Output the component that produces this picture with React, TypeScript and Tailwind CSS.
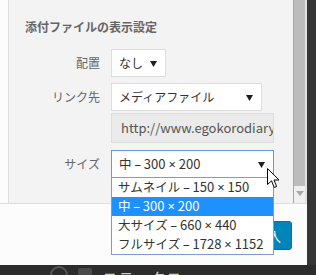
const font = "font-['Noto_Sans_CJK_JP','Noto_Sans',sans-serif]";

const sizes = [
  { name: "サムネイル", dims: ["150", "150"], selected: false },
  { name: "中", dims: ["300", "200"], selected: true },
  { name: "大サイズ", dims: ["660", "440"], selected: false },
  { name: "フルサイズ", dims: ["1728", "1152"], selected: false },
];

// dash and × come out full width in the CJK font, so set them in a latin face
function SizeLabel({ name, dims }: { name: string; dims: string[] }) {
  const sym = "font-['Noto_Sans',sans-serif]";
  return (
    <span className="whitespace-nowrap text-[13px]">
      <span className="text-[12.5px]">{name}</span> <span className={sym}>–</span> {dims[0]}{" "}
      <span className={sym}>×</span> {dims[1]}
    </span>
  );
}

function Caret() {
  return (
    <svg width="7" height="7" viewBox="0 0 7 7" className="shrink-0">
      <polygon points="0,1 7,1 3.5,7" fill="#1e1e1e" />
    </svg>
  );
}

function Select({
  children,
  width,
  focused,
}: {
  children: React.ReactNode;
  width: string;
  focused?: boolean;
}) {
  return (
    <div
      className={`${width} h-[28px] flex items-center justify-between pl-[7px] pr-[8px] bg-white border text-[12px] text-[#333] ${
        focused ? "border-[#5b9dd9]" : "border-[#ddd]"
      }`}
    >
      <span className="whitespace-nowrap">{children}</span>
      <Caret />
    </div>
  );
}

function Row({ label, children }: { label: string; children: React.ReactNode }) {
  return (
    <div className="flex items-center">
      <div className="w-[75px] text-right text-[12px] text-[#666] shrink-0">{label}</div>
      <div className="ml-[11px]">{children}</div>
    </div>
  );
}

export default function App() {
  return (
    <div className={`relative w-[316px] h-[275px] overflow-hidden bg-[#363636] ${font}`}>
      <div className="flex flex-col w-[307px]">
        {/* Settings panel */}
        <div className="flex h-[204px] border-b border-[#dddddd]">
          <div className="w-[8px] bg-[#fcfcfc]" />
          <div className="flex-1 bg-[#f3f3f3] border-l border-[#dddddd] pl-[16px] pt-[18px]">
            <h2 className="text-[12px] leading-[18px] font-bold text-[#666]">添付ファイルの表示設定</h2>
            <div className="mt-[13px]">
              <Row label="配置">
                <Select width="w-[55px]">なし</Select>
              </Row>
            </div>
            <div className="mt-[6px]">
              <Row label="リンク先">
                <Select width="w-[151px]">メディアファイル</Select>
              </Row>
            </div>
            <div className="mt-[2px] ml-[86px] w-[163px] h-[30px] flex items-center pl-[9px] bg-[#ebebeb] border border-[#dddddd] text-[13px] text-[#555] overflow-hidden whitespace-nowrap">
              http://www.egokorodiary.com/wp-content/uploads
            </div>
            <div className="mt-[7px]">
              <Row label="サイズ">
                <Select width="w-[163px]" focused>
                  <SizeLabel name="中" dims={["300", "200"]} />
                </Select>
              </Row>
            </div>
          </div>
          {/* Scrollbar */}
          <div className="w-[12px] flex flex-col bg-[#f0f0f0] border-l border-[#a6a6a6]">
            <div className="h-[186px] bg-[#bcbcbc]" />
            <div className="flex justify-center pt-[5px]">
              <svg width="8" height="5" viewBox="0 0 8 5">
                <polygon points="0,0 8,0 4,5" fill="#a8a8a8" />
              </svg>
            </div>
          </div>
          <div className="w-[2px] bg-[#e2e2e2]" />
        </div>

        {/* Footer */}
        <div className="h-[61px] bg-[#fcfcfc] flex justify-end items-start pr-[15px] pt-[17px]">
          <div className="h-[29px] px-[10px] flex items-center rounded-[3px] bg-[#0085ba] border border-[#0073aa] text-white text-[13px] whitespace-nowrap">
            投稿に挿入
          </div>
        </div>
      </div>

      {/* Admin bar below */}
      <div className="flex items-start h-[10px] bg-[#2c2c2c] pl-[50px] pt-[1px]">
        <div className="w-[18px] h-[18px] rounded-full border-2 border-[#555]" />
        <div className="ml-[10px] mt-[2px] w-[14px] h-[8px] bg-[#4a4a4a] rounded-[2px]" />
        <span className="ml-[10px] mt-[2px] text-[16px] leading-[20px] text-[#cfcfcf]">ステータス</span>
      </div>

      {/* Open dropdown list */}
      <div className="absolute left-[111px] top-[177px] w-[163px] bg-white border border-[#7a9cd3]">
        {sizes.map((s) => (
          <div
            key={s.name}
            className={`h-[19px] pl-[6px] flex items-center ${
              s.selected ? "bg-[#1e90ff] text-white" : "text-[#333]"
            }`}
          >
            <SizeLabel name={s.name} dims={s.dims} />
          </div>
        ))}
      </div>

      {/* Mouse cursor */}
      <svg className="absolute left-[267px] top-[168px]" width="13" height="21" viewBox="0 0 13 21">
        <path
          d="M0.5 0.5 L0.5 16.5 L4.5 12.8 L7.2 19.5 L9.6 18.5 L7 12 L12 12 Z"
          fill="#fff"
          stroke="#000"
          strokeWidth="1"
          strokeLinejoin="miter"
        />
      </svg>
    </div>
  );
}
